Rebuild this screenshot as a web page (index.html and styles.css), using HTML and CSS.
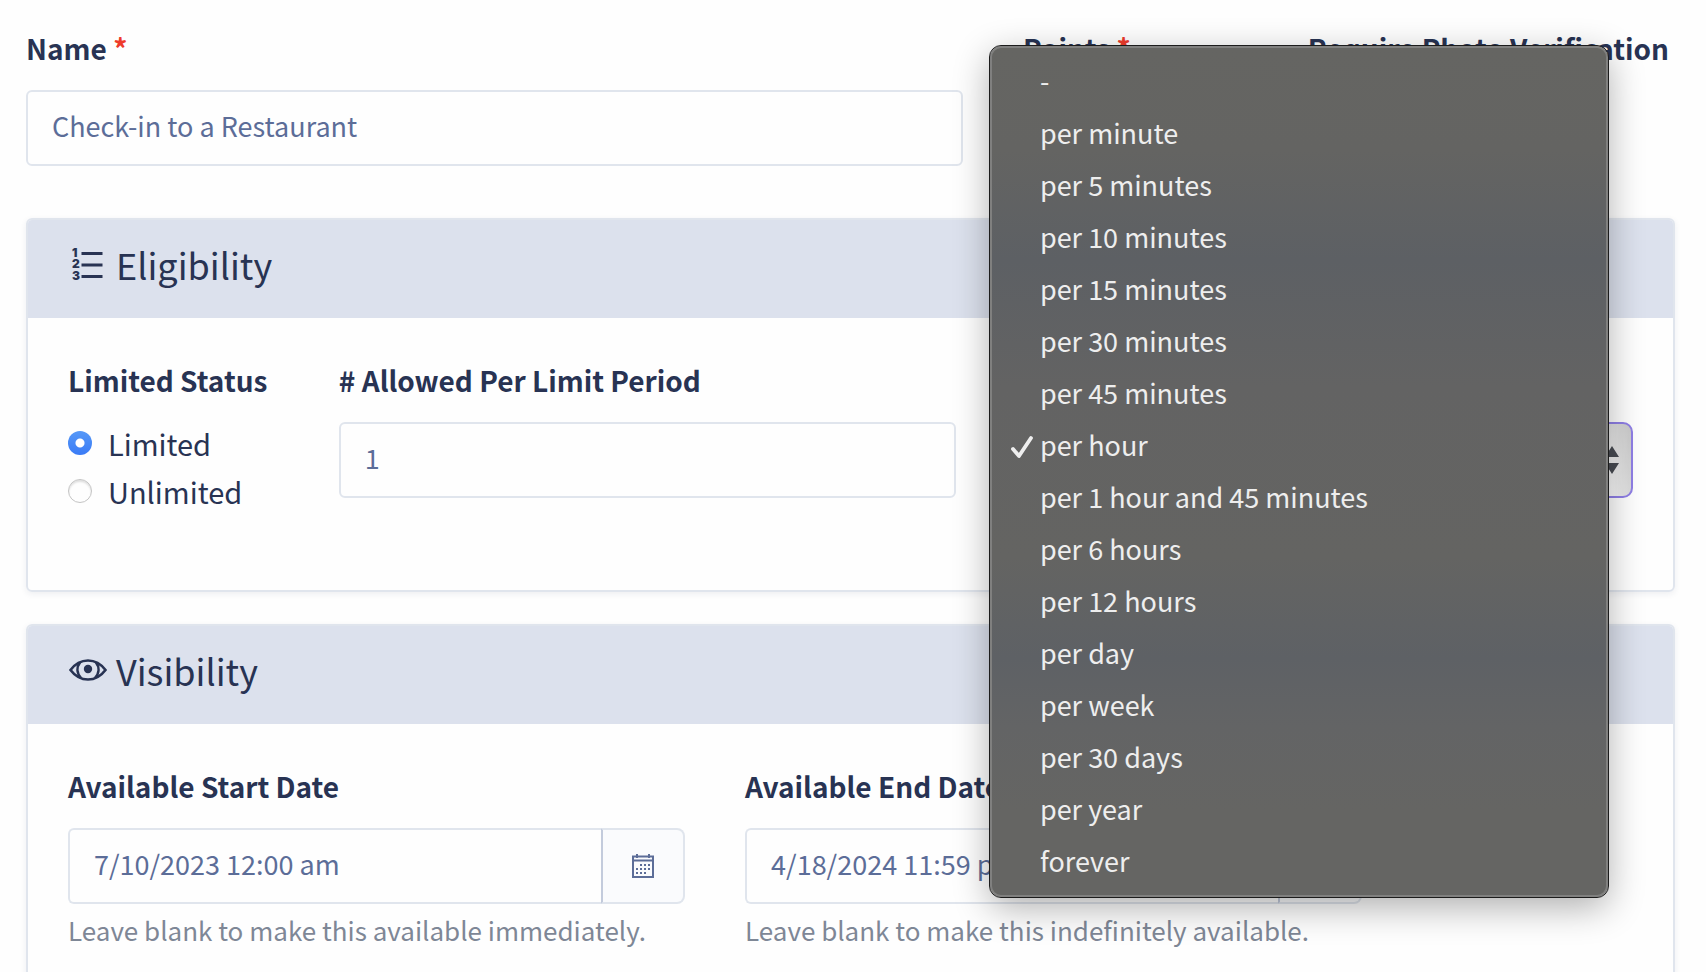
FILE: index.html
```html
<!DOCTYPE html>
<html lang="en">
<head>
  <meta charset="UTF-8">
  <title>Edit Activity</title>
  <meta name="viewport" content="width=device-width, initial-scale=1.0" />
  <link rel="stylesheet" href="styles.css">
</head>
<body>
  <form class="page">
    <div class="row">
      <div class="col col-7">
        <label class="label" for="name">Name <span class="required">*</span></label>
        <input class="control" type="text" id="name" value="Check-in to a Restaurant" required />
      </div>
      <div class="col col-2">
        <label class="label" for="points">Points <span class="required">*</span></label>
        <input class="control" type="text" id="points" required />
      </div>
      <div class="col col-3">
        <label class="label" for="photo">Require Photo Verification</label>
        <input class="radio" type="checkbox" id="photo" />
      </div>
    </div>

    <section class="card">
      <h2 class="card-header">
        <svg class="card-icon" viewBox="0 0 38 34" aria-hidden="true">
          <g class="icon-digits">
            <text x="4" y="10">1</text>
            <text x="4" y="21">2</text>
            <text x="4" y="33">3</text>
          </g>
          <path d="M13.500 6.500h21M13.500 18h21M13.500 29.500h21" fill="none" stroke="currentColor" stroke-width="2.800" />
        </svg>
        Eligibility
      </h2>
      <div class="card-body">
        <div class="row">
          <div class="col col-2" role="radiogroup" aria-labelledby="statusLabel">
            <div class="label" id="statusLabel">Limited Status</div>
            <label class="choice"><input class="radio" type="radio" name="status" value="limited" checked /> Limited</label>
            <label class="choice"><input class="radio" type="radio" name="status" value="unlimited" /> Unlimited</label>
          </div>
          <div class="col col-5">
            <label class="label" for="allowed"># Allowed Per Limit Period</label>
            <input class="control" type="text" id="allowed" value="1" />
          </div>
          <div class="col col-5">
            <div class="select-wrap">
              <select class="control select" id="period" aria-label="Limit Period">
                <option>per hour</option>
              </select>
              <svg class="select-arrows" viewBox="0 0 14 28" aria-hidden="true">
                <path d="M7 0l7 11H0zM7 28l7-11H0z" fill="#484b52" />
              </svg>
              <ul class="menu" role="listbox" aria-label="Limit Period">
                <li role="option">-</li>
                <li role="option">per minute</li>
                <li role="option">per 5 minutes</li>
                <li role="option">per 10 minutes</li>
                <li role="option">per 15 minutes</li>
                <li role="option">per 30 minutes</li>
                <li role="option">per 45 minutes</li>
                <li role="option" aria-selected="true">
                  <svg class="check" viewBox="0 0 22 24" aria-hidden="true">
                    <path d="M2 14l6 7L20 3" fill="none" stroke="currentColor" stroke-width="3.800" stroke-linecap="round" stroke-linejoin="round" />
                  </svg>
                  per hour
                </li>
                <li role="option">per 1 hour and 45 minutes</li>
                <li role="option">per 6 hours</li>
                <li role="option">per 12 hours</li>
                <li role="option">per day</li>
                <li role="option">per week</li>
                <li role="option">per 30 days</li>
                <li role="option">per year</li>
                <li role="option">forever</li>
              </ul>
            </div>
          </div>
        </div>
      </div>
    </section>

    <section class="card">
      <h2 class="card-header">
        <svg class="card-icon" viewBox="0 0 38 34" aria-hidden="true">
          <g fill="none" stroke="currentColor" stroke-width="2.600">
            <path d="M2.500 17C7 11 13 7.500 20 7.500S33 11 37.500 17C33 23 27 26.500 20 26.500S7 23 2.500 17z" />
            <path d="M12 9.500C8.500 14 8.500 20 13 25M28 9.500C31.500 14 31.500 20 27 25" />
          </g>
          <circle cx="20" cy="16" r="4.200" fill="currentColor" />
        </svg>
        Visibility
      </h2>
      <div class="card-body">
        <div class="row">
          <div class="col col-5">
            <label class="label" for="startDate">Available Start Date</label>
            <div class="input-group">
              <input class="control" type="text" id="startDate" value="7/10/2023 12:00 am" />
              <button class="calendar-btn" type="button" aria-label="Pick start date">
                <svg width="22" height="24" viewBox="0 0 22 24" aria-hidden="true">
                  <path d="M1 2.500h20V23H1zM1 6.500h20M5 0v4M17 0v4" fill="none" stroke="currentColor" stroke-width="2" />
                  <path d="M8 11h11M4 15h15M4 19h11" fill="none" stroke="currentColor" stroke-width="2" stroke-dasharray="2 2" />
                </svg>
              </button>
            </div>
            <p class="help">Leave blank to make this available immediately.</p>
          </div>
          <div class="col col-5">
            <label class="label" for="endDate">Available End Date</label>
            <div class="input-group">
              <input class="control" type="text" id="endDate" value="4/18/2024 11:59 pm" />
              <button class="calendar-btn" type="button" aria-label="Pick end date">
                <svg width="22" height="24" viewBox="0 0 22 24" aria-hidden="true">
                  <path d="M1 2.500h20V23H1zM1 6.500h20M5 0v4M17 0v4" fill="none" stroke="currentColor" stroke-width="2" />
                  <path d="M8 11h11M4 15h15M4 19h11" fill="none" stroke="currentColor" stroke-width="2" stroke-dasharray="2 2" />
                </svg>
              </button>
            </div>
            <p class="help">Leave blank to make this indefinitely available.</p>
          </div>
        </div>
      </div>
    </section>
  </form>
</body>
</html>
```
FILE: styles.css
```css
* {
  box-sizing: border-box;
}

body {
  margin: 0;
  font-family: "Noto Sans CJK SC", "Noto Sans", sans-serif;
  font-size: 28px;
  line-height: 48px;
  color: #283353;
  background: #fefefe;
}

.page {
  height: 100vh;
  padding: 24px 31px 0 26px;
  overflow: hidden;
}

.row {
  display: flex;
  margin: 0 -30px;
}

.col {
  flex: none;
  padding: 0 30px;
  margin-bottom: 52px;
}

.col-2 { width: 16.6667%; }
.col-3 { width: 25%; }
.col-5 { width: 41.6667%; }
.col-7 { width: 58.3333%; }

.label {
  display: block;
  margin-bottom: 18px;
  font-weight: 600;
  white-space: nowrap;
}

.required {
  color: #ee3b2b;
}

.control {
  display: block;
  width: 100%;
  height: 76px;
  padding: 0 24px 6px;
  border: 2px solid #e0e5ed;
  border-radius: 6px;
  background: #fefefe;
  font: inherit;
  font-size: 27px;
  color: #5c6d98;
}

/* cards */
.card {
  margin-bottom: 32px;
  border: 2px solid #e0e5ed;
  border-radius: 6px;
  box-shadow: 0 2px 6px rgba(40, 51, 83, 0.08);
}

.card-header {
  display: flex;
  align-items: center;
  gap: 10px;
  margin: 0;
  padding: 20px 40px 30px;
  border-radius: 4px 4px 0 0;
  background: #dce1ed;
  font-size: 36px;
  font-weight: 400;
}

.card-icon {
  width: 38px;
  height: 34px;
  overflow: visible;
}

.icon-digits {
  fill: currentColor;
  font-family: Inter, sans-serif;
  font-size: 12px;
  font-weight: 900;
}

.card-body {
  padding: 38px 40px 20px;
}

/* radios */
.choice {
  display: flex;
  align-items: center;
  gap: 16px;
  margin-bottom: 6px;
  font-size: 29px;
  line-height: 42px;
}

.radio {
  appearance: none;
  width: 24px;
  height: 24px;
  margin: 0;
  border: 1px solid #c4c4c4;
  border-radius: 50%;
  background: #fefefe;
  box-shadow: inset 0 2px 2px rgba(0, 0, 0, 0.12);
}

.radio:checked {
  border: none;
  background: radial-gradient(circle, #fff 4px, transparent 5px), linear-gradient(#5598f7, #3a7bf6);
  box-shadow: none;
}

/* select and its open menu */
.select-wrap {
  position: relative;
  margin-top: 66px;
}

.select {
  appearance: none;
  border-color: #8f7fe6;
  border-radius: 10px;
  background: linear-gradient(to right, transparent 97%, rgba(0, 0, 0, 0.12)), linear-gradient(#e4e4e4, #fafafa);
}

.select-arrows {
  position: absolute;
  top: 24px;
  right: 14px;
  width: 14px;
  height: 28px;
}

.menu {
  position: absolute;
  top: -376px;
  left: -26px;
  right: 25px;
  z-index: 10;
  margin: 0;
  padding: 7px 0 8px;
  border: 2px solid #80807f;
  border-radius: 11px;
  outline: 1px solid #1c1c1c;
  background: linear-gradient(#656562, #646462 12%, #5d6064 25%, #636363 40%, #646462 60%, #5e6165 72%, #636465 80%, #656563 90%);
  box-shadow: 0 10px 36px rgba(0, 0, 0, 0.32);
  list-style: none;
  font-size: 27px;
  line-height: 52px;
  color: #eeeeee;
}

.menu li {
  position: relative;
  padding-left: 48px;
}

.check {
  position: absolute;
  top: 16px;
  left: 19px;
  width: 22px;
  height: 24px;
}

/* date fields */
.input-group {
  display: flex;
}

.input-group .control {
  flex: 1;
  min-width: 0;
  border-right: none;
  border-radius: 6px 0 0 6px;
}

.calendar-btn {
  display: flex;
  align-items: center;
  justify-content: center;
  width: 84px;
  padding: 0;
  border: 2px solid #e0e5ed;
  border-left-color: #c3cbdc;
  border-radius: 0 8px 8px 0;
  background: #fafbfd;
  color: #5c6d98;
}

.help {
  margin: 6px 0 0;
  font-size: 26px;
  line-height: 40px;
  color: #7e8796;
  white-space: nowrap;
}
```
